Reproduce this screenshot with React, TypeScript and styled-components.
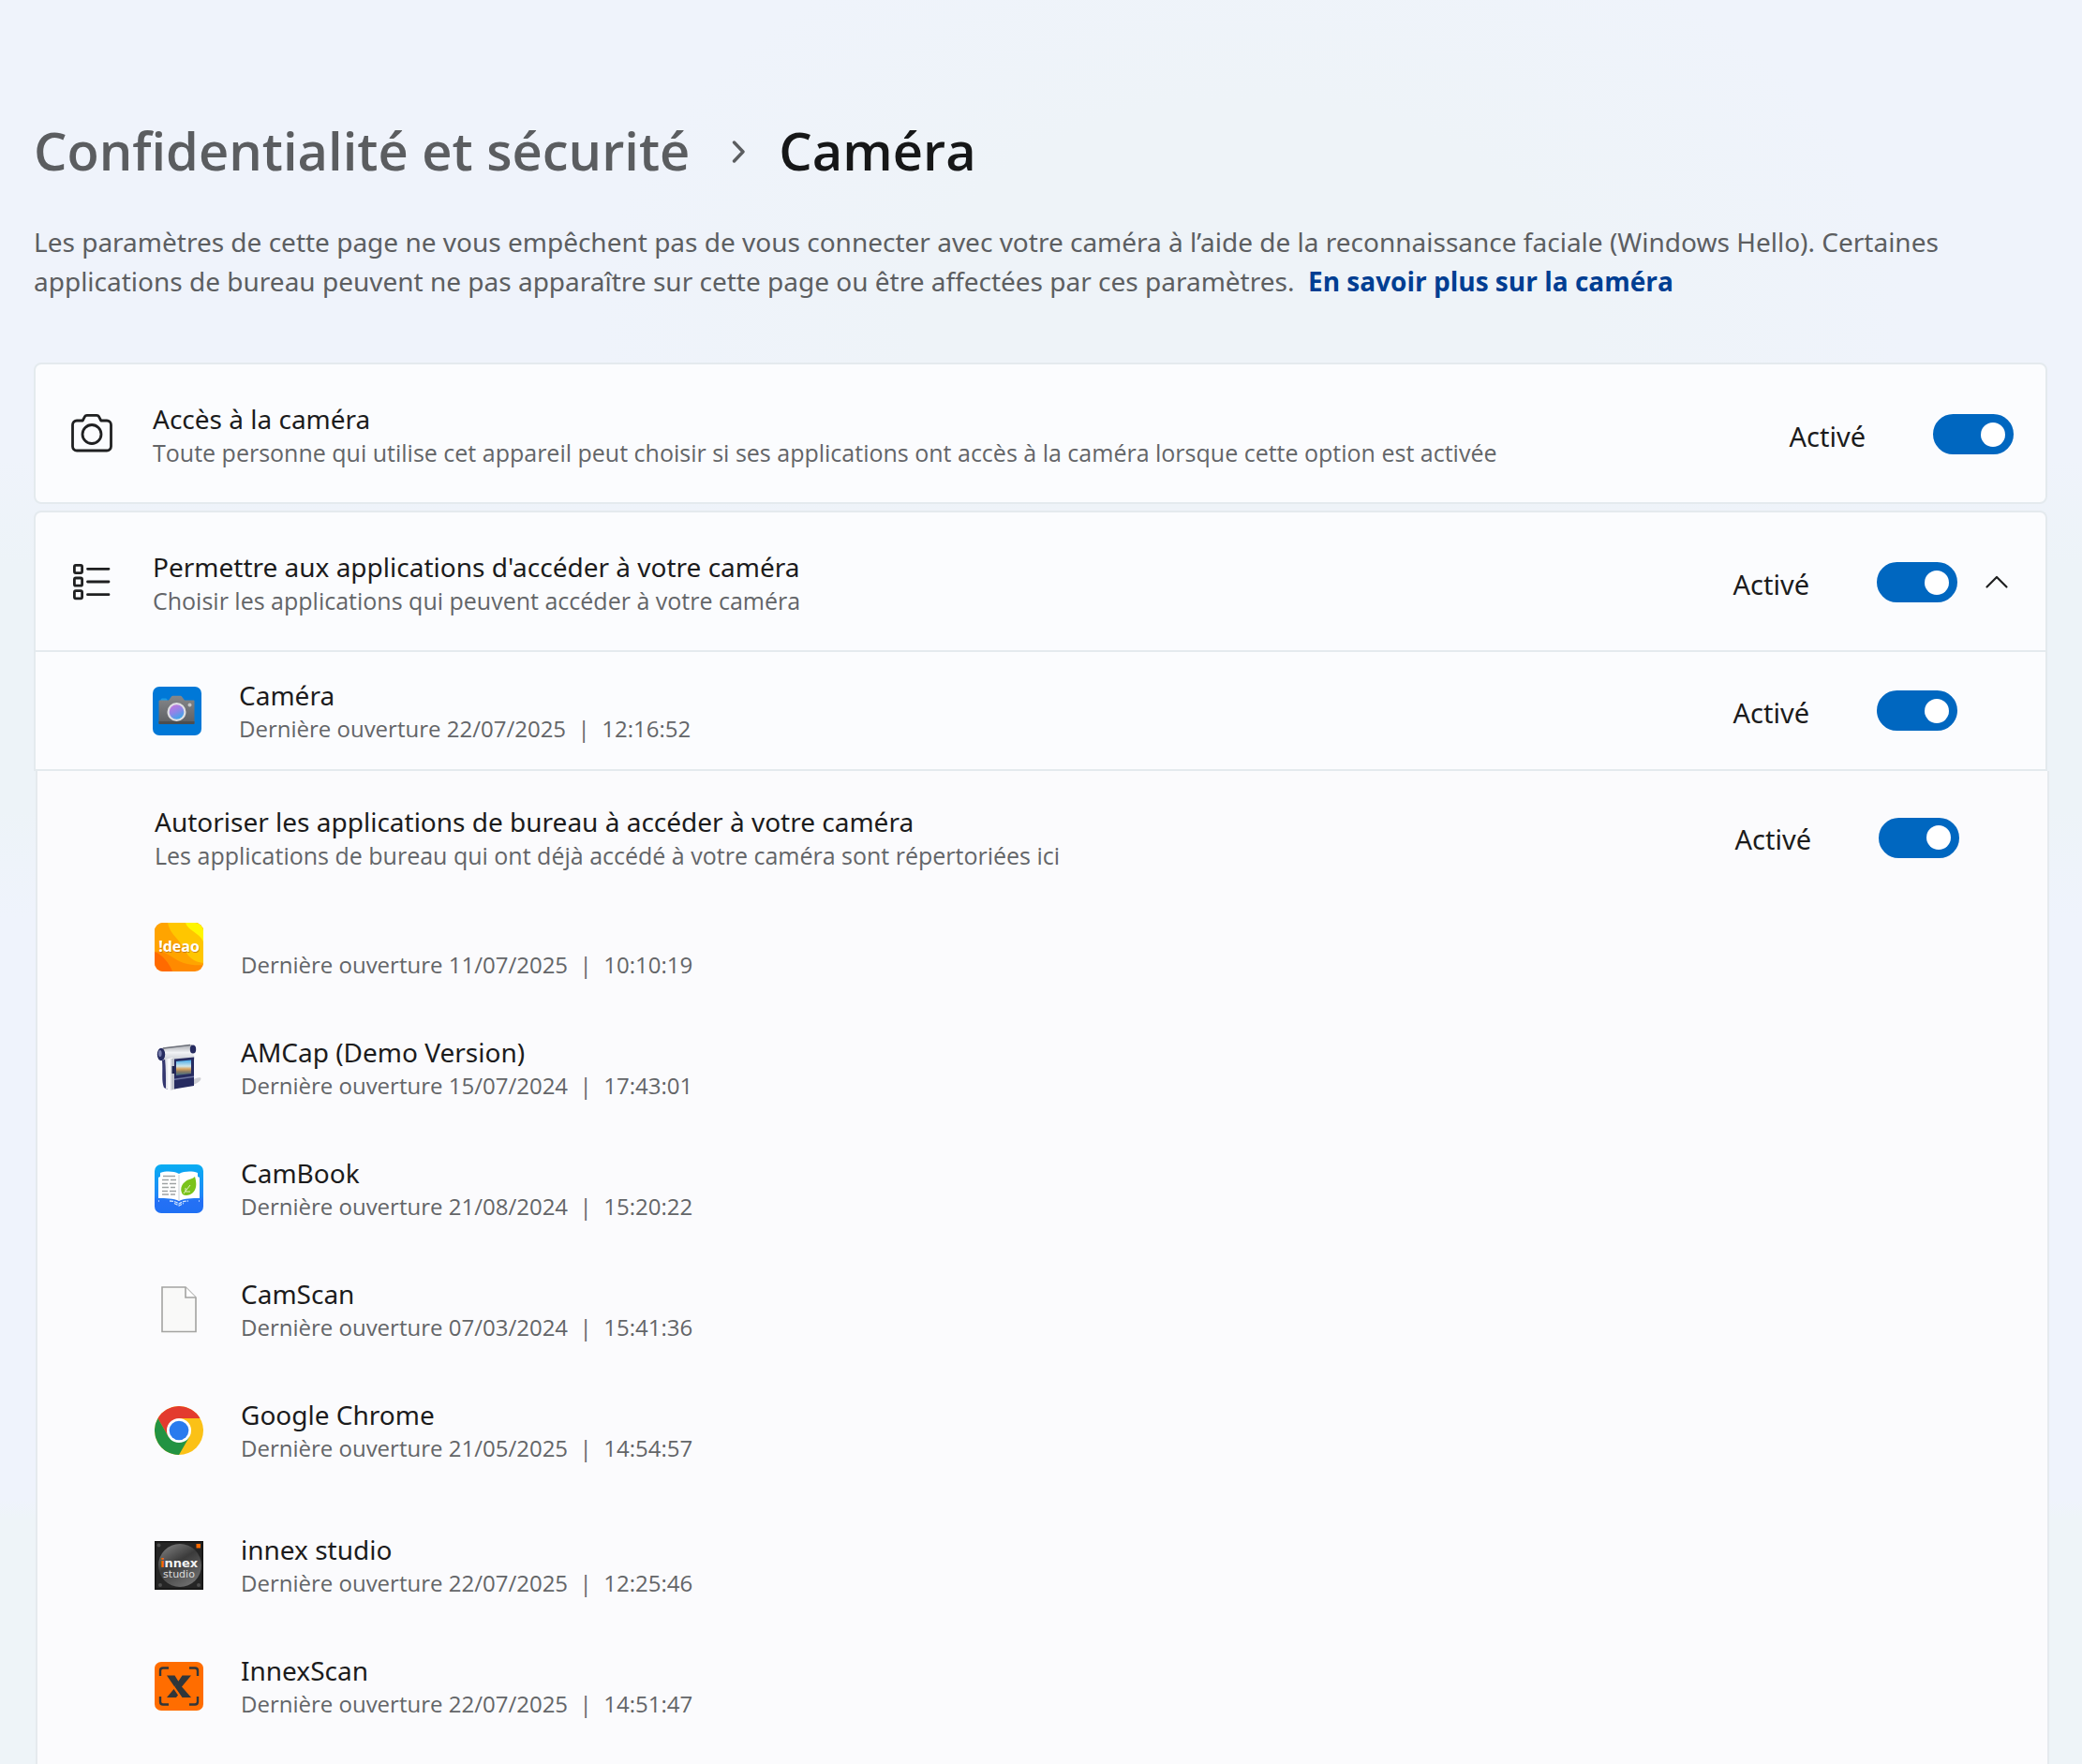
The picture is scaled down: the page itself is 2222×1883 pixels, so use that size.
import React, { useId, useState } from "react";
import styled, { createGlobalStyle } from "styled-components";

const GlobalStyle = createGlobalStyle`
  * { box-sizing: border-box; }
  body {
    margin: 0;
    font-family: "Open Sans", "Noto Sans", sans-serif;
    color: #1b1b1c;
    background: #eff3fb;
  }
`;

const Page = styled.main`
  display: flex;
  flex-direction: column;
  min-height: 100vh;
  padding: 120px 37px 0 36px;
  background:
    radial-gradient(ellipse 700px 460px at 60% 18%, #eef3f8 0%, #eef3f8 50%, #eef3f800 100%),
    linear-gradient(180deg, #eff3fb 0%, #eff3fb 26%, #edf3f8 32%, #edf3f8 46%, #eff3fc 52%, #eff3fc 85%, #eef4f8 86%, #eef4f8 100%);
`;

const Breadcrumb = styled.nav`
  display: flex;
  align-items: center;
  font-size: 56px;
  line-height: 80px;
  font-weight: 600;
`;

const ParentLink = styled.a`
  color: #5b5d60;
  text-decoration: none;
`;

const Separator = styled.svg`
  flex: none;
  width: 17px;
  height: 24px;
  margin: 4px 34px 0 44px;
`;

const PageTitle = styled.h1`
  margin: 0;
  font: inherit;
  color: #161718;
`;

const Intro = styled.p`
  margin: 37px 0 66px;
  font-family: "Noto Sans", "Open Sans", sans-serif;
  font-size: 28px;
  line-height: 42px;
  color: #5c5e61;
  white-space: pre-wrap;
`;

const LearnMore = styled.a`
  font-family: "Open Sans", "Noto Sans", sans-serif;
  font-weight: 700;
  color: #003e92;
  text-decoration: none;
`;

const Card = styled.section`
  border: 2px solid #e4eaee;
  border-radius: 8px;
  background: #fbfcfe;
`;

const Expander = styled(Card)`
  margin-top: 7px;
  border-bottom: 0;
  border-radius: 8px 8px 0 0;
`;

const DesktopPanel = styled.section`
  flex: 1;
  margin: 0 -2px 0 2px;
  border: 2px solid #e5eaee;
  border-top: 0;
  border-bottom: 0;
  background: #fbfbfd;
`;

const SettingRow = styled.div`
  display: flex;
  align-items: center;
  min-height: 147px;
  padding: 2px 34px 0 36px;
`;

const AppRow = styled.div`
  display: flex;
  align-items: center;
  min-height: 129px;
  padding: 0 94px 0 125px;
  border-top: 2px solid #e4eaee;
  border-bottom: 2px solid #e4eaee;
`;

const DesktopHeader = styled.div`
  display: flex;
  align-items: center;
  padding: 35px 94px 16px 125px;
`;

const AppList = styled.ul`
  list-style: none;
  margin: 0;
  padding: 0;
  & + & { margin-top: 15px; }
`;

const DesktopApp = styled.li`
  display: flex;
  align-items: center;
  min-height: 129px;
  padding-left: 125px;
`;

const GlyphSlot = styled.span`
  flex: none;
  display: flex;
  justify-content: center;
  width: 48px;
  margin-right: 41px;
`;

const AppIcon = styled.svg`
  flex: none;
  display: block;
  width: 52px;
  height: 52px;
  margin-right: 40px;
`;

const Texts = styled.div`
  flex: 1;
  min-width: 0;
`;

const Title = styled.div`
  min-height: 38px;
  font-family: "Noto Sans", "Open Sans", sans-serif;
  font-size: 28px;
  line-height: 38px;
`;

const Caption = styled.div`
  font-size: 25px;
  line-height: 34px;
  color: #636568;
`;

const Timestamp = styled(Caption)`
  font-size: 24px;
  white-space: pre-wrap;
`;

const SwitchField = styled.div`
  flex: none;
  display: flex;
  align-items: center;
  gap: 72px;
`;

const SwitchLabel = styled.label`
  padding-top: 4px;
  font-family: "Noto Sans", "Open Sans", sans-serif;
  font-size: 29px;
  line-height: 38px;
`;

const SwitchInput = styled.input`
  appearance: none;
  display: flex;
  align-items: center;
  width: 86px;
  height: 43px;
  margin: 0;
  padding: 0 8px;
  border: 2px solid #0067c0;
  border-radius: 22px;
  background: #ffffff;
  cursor: pointer;
  &::before {
    content: "";
    width: 26px;
    height: 26px;
    border-radius: 50%;
    background: #5c5e61;
  }
  &:checked {
    justify-content: flex-end;
    padding-right: 7px;
    background: #0067c0;
  }
  &:checked::before { background: #ffffff; }
`;

const CollapseButton = styled.button`
  flex: none;
  display: flex;
  justify-content: center;
  align-items: center;
  width: 40px;
  height: 43px;
  margin: 0 -2px 0 22px;
  padding: 0;
  border: 0;
  background: none;
  color: inherit;
  cursor: pointer;
`;

function Switch({ name }: { name: string }) {
  const id = useId();
  const [on, setOn] = useState(true);
  return (
    <SwitchField>
      <SwitchLabel htmlFor={id}>{on ? "Activé" : "Désactivé"}</SwitchLabel>
      <SwitchInput id={id} type="checkbox" role="switch" title={name} checked={on} onChange={(e) => setOn(e.target.checked)} />
    </SwitchField>
  );
}

const CameraGlyph = () => (
  <svg width="48" height="48" viewBox="0 0 48 48" fill="none" stroke="#1f2021" strokeWidth="2.8" strokeLinejoin="round" aria-hidden="true">
    <path d="M8 9h6.200l2.200-4.200c.5-.9 1.300-1.400 2.300-1.400h10.600c1 0 1.800.5 2.300 1.400L33.800 9H40a4.500 4.500 0 0 1 4.500 4.500v23a4.500 4.500 0 0 1-4.500 4.500H8a4.500 4.500 0 0 1-4.500-4.500v-23A4.500 4.500 0 0 1 8 9z" />
    <circle cx="24" cy="23.500" r="10" />
  </svg>
);

const ListGlyph = () => (
  <svg width="48" height="48" viewBox="0 0 48 48" fill="none" stroke="#1f2021" strokeWidth="2.8" strokeLinecap="round" aria-hidden="true">
    <rect x="5.400" y="5.400" width="8.200" height="8.200" rx="1.500" />
    <rect x="5.400" y="19" width="8.200" height="8.200" rx="1.500" />
    <rect x="5.400" y="32.600" width="8.200" height="8.200" rx="1.500" />
    <path d="M19.500 9.300H42M19.500 23H42M19.500 36.700H42" />
  </svg>
);

const CameraApp = () => (
  <AppIcon viewBox="0 0 52 52" aria-hidden="true">
    <defs>
      <linearGradient id="body" x1="0" y1="0" x2="0" y2="1">
        <stop offset="0" stopColor="#85878a" />
        <stop offset="1" stopColor="#5d5f62" />
      </linearGradient>
      <linearGradient id="lens" x1="0.2" y1="0" x2="0.7" y2="1">
        <stop offset="0" stopColor="#c477dd" />
        <stop offset="0.5" stopColor="#8b86e8" />
        <stop offset="1" stopColor="#35a9ea" />
      </linearGradient>
    </defs>
    <rect width="52" height="52" rx="7" fill="#0078d7" />
    <rect x="8.500" y="12.500" width="7" height="5" rx="1.500" fill="#199be8" />
    <path d="M7.500 14.500H17l3-4c.4-.5.8-.7 1.400-.7h8.200c.6 0 1 .2 1.400.7l3 4h9.500c.6 0 1 .4 1 1V39c0 .6-.4 1-1 1h-36c-.6 0-1-.4-1-1V15.500c0-.6.4-1 1-1z" fill="url(#body)" />
    <path d="M6.500 37h38v2c0 .6-.4 1-1 1h-36c-.6 0-1-.4-1-1z" fill="#4c4e50" />
    <circle cx="39.500" cy="19.500" r="2" fill="#c2c4c6" />
    <circle cx="25.500" cy="27" r="10" fill="#dfe0e4" />
    <circle cx="25.500" cy="27" r="7.800" fill="url(#lens)" />
  </AppIcon>
);

const IdeaoApp = () => (
  <AppIcon viewBox="0 0 52 52" aria-hidden="true">
    <clipPath id="tile"><rect width="52" height="52" rx="9" /></clipPath>
    <g clipPath="url(#tile)">
      <rect width="52" height="52" fill="#ff8a00" />
      <path d="M0 31C8 34 15 42 19 52H0z" fill="#ff6a00" />
      <path d="M0 0h52v45C40 46 30 44 21 38 12 32 8 30 0 31z" fill="#ffa400" />
      <path d="M14 0c2 10 8 14 13 21 6 9 9 20 25 22V0z" fill="#ffc600" />
      <path d="M33 0c2 8 14 10 19 20V0z" fill="#fff600" />
      <text x="26.500" y="32" textAnchor="middle" fontFamily="Open Sans, sans-serif" fontWeight="700" fontSize="16" fill="#b86a10" opacity="0.7" aria-hidden="true">!deao</text>
      <text x="26" y="31" textAnchor="middle" fontFamily="Open Sans, sans-serif" fontWeight="700" fontSize="16" fill="#ffffff">!deao</text>
    </g>
  </AppIcon>
);

const AmcapApp = () => (
  <AppIcon viewBox="0 0 52 52" aria-hidden="true">
    <defs>
      <linearGradient id="metal" x1="0" y1="0" x2="0" y2="1">
        <stop offset="0" stopColor="#a4a7ae" />
        <stop offset="0.5" stopColor="#f1f2f5" />
        <stop offset="1" stopColor="#c9ccd3" />
      </linearGradient>
      <linearGradient id="side" x1="0" y1="0" x2="1" y2="0">
        <stop offset="0" stopColor="#d5d7df" />
        <stop offset="0.4" stopColor="#ffffff" />
        <stop offset="0.7" stopColor="#b9bcc6" />
        <stop offset="1" stopColor="#e6e7ec" />
      </linearGradient>
      <linearGradient id="screen" x1="0" y1="0" x2="0" y2="1">
        <stop offset="0" stopColor="#45a9e8" />
        <stop offset="0.4" stopColor="#cfe6ea" />
        <stop offset="0.58" stopColor="#dba560" />
        <stop offset="0.75" stopColor="#8a7a62" />
        <stop offset="1" stopColor="#3f6c86" />
      </linearGradient>
    </defs>
    <path d="M38 40c5-3 11-5 11.500-3 0 4-7 7-15 9z" fill="#8f9199" opacity="0.4" />
    <path d="M8 18l5-2 1 33-4-2C7 40 9 30 8 18z" fill="#34376f" />
    <path d="M11 16h12v32l-6 2-5-2c0-12 0-22-1-32z" fill="url(#side)" />
    <path d="M8 4.500L40 1v8l3 6-1 3H21l-2-3-9 2z" fill="url(#metal)" />
    <path d="M9 5L38 1.500" stroke="#6d7079" strokeWidth="1.600" />
    <ellipse cx="7" cy="11.500" rx="4.200" ry="6.800" fill="#262b60" />
    <ellipse cx="5.800" cy="10.500" rx="1.800" ry="3.500" fill="#777dab" />
    <ellipse cx="41" cy="6" rx="3.200" ry="4.600" fill="#262b60" />
    <path d="M21 16.500l21-2V45l-21 3.500z" fill="#262b60" />
    <path d="M18.500 24h3v8h-3z" fill="#20254f" />
    <path d="M23 19l16-1.500V32l-16 2z" fill="url(#screen)" />
    <path d="M21 37.500l21-3v1.600l-21 3z" fill="#6f76a3" />
  </AppIcon>
);

const CamBookApp = () => (
  <AppIcon viewBox="0 0 52 52" aria-hidden="true">
    <defs>
      <linearGradient id="sky" x1="0" y1="0" x2="0" y2="1">
        <stop offset="0" stopColor="#08adf2" />
        <stop offset="0.65" stopColor="#1f86f8" />
        <stop offset="0.75" stopColor="#2470f5" />
        <stop offset="1" stopColor="#1f70f4" />
      </linearGradient>
    </defs>
    <rect width="52" height="52" rx="7" fill="url(#sky)" />
    <path d="M4 36V14l2-1V9c6-2 14-2 20 1 6-3 14-3 20-1v4l2 1v22c-8 0-16 0-22 3-6-3-14-3-22-3z" fill="#ffffff" />
    <path d="M26 11v27" stroke="#dde2e4" strokeWidth="1.500" />
    <path d="M9 12.500h13M8 16.500h7m2 0h6M8 20.500h6m2 0h7M8 24.500h7m2 0h5M8 28.500h6m2 0h7M8 32h7m2 0h5" stroke="#9ea3a4" strokeWidth="1.400" />
    <path d="M43 13c2 7 2 13-2 17-3 3-8 4-11 2-3-4-2-10 2-13 4-4 8-3 11-6z" fill="#7ac31c" />
    <path d="M31 31l7-9M33 29v-4m0 4h5" stroke="#dff0c2" strokeWidth="1" fill="none" />
    <path d="M16 39c4 0 7 1 10 3 3-2 6-3 10-3M4 39h1m42 0h1M21 41.500l5 2.500 5-2.500" stroke="#cfe4ff" strokeWidth="1.300" strokeDasharray="4 1" fill="none" />
  </AppIcon>
);

const CamScanApp = () => (
  <AppIcon viewBox="0 0 52 52" aria-hidden="true">
    <path d="M8 2h25l11 11v36.500H8z" fill="#f9f9f8" stroke="#a3a3a1" strokeWidth="1.600" />
    <path d="M33 2v11h11" fill="#ffffff" stroke="#a3a3a1" strokeWidth="1.600" />
  </AppIcon>
);

const ChromeApp = () => (
  <AppIcon viewBox="0 0 52 52" aria-hidden="true">
    <circle cx="26" cy="26" r="26" fill="#fbc116" />
    <path d="M3.480 13A26 26 0 0 1 48.520 13H26L14.740 32.500z" fill="#e33b2e" />
    <path d="M3.480 13A26 26 0 0 0 26 52L37.260 32.500 26 26 14.740 32.500z" fill="#229342" />
    <circle cx="26" cy="26" r="13" fill="#ffffff" />
    <circle cx="26" cy="26" r="10.300" fill="#2a7bee" />
  </AppIcon>
);

const InnexStudioApp = () => (
  <AppIcon viewBox="0 0 52 52" aria-hidden="true">
    <defs>
      <linearGradient id="disc" x1="0" y1="0" x2="0.6" y2="1">
        <stop offset="0" stopColor="#8a8a8a" />
        <stop offset="0.5" stopColor="#3b3b3b" />
        <stop offset="1" stopColor="#6b6b6b" />
      </linearGradient>
    </defs>
    <rect width="52" height="52" fill="#131313" />
    <rect x="1.500" y="1.500" width="49" height="49" fill="#252525" />
    <circle cx="27" cy="26" r="23" fill="url(#disc)" />
    <circle cx="4.500" cy="4.500" r="2" fill="#4c4c4c" />
    <circle cx="6" cy="47" r="2" fill="#4c4c4c" />
    <circle cx="47" cy="47" r="2" fill="#4c4c4c" />
    <rect x="44.500" y="3" width="4.500" height="4.500" fill="#ff6a00" />
    <text x="26" y="28" textAnchor="middle" fontFamily="DejaVu Sans, sans-serif" fontWeight="700" fontSize="13" fill="#f2f2f2"><tspan fill="#ff6a00">i</tspan>nnex</text>
    <text x="26" y="39" textAnchor="middle" fontFamily="DejaVu Sans, sans-serif" fontSize="11" fill="#dcdcdc">studio</text>
  </AppIcon>
);

const InnexScanApp = () => (
  <AppIcon viewBox="0 0 52 52" aria-hidden="true">
    <rect width="52" height="52" rx="7" fill="#ff6d00" />
    <path d="M6 15V9.500C6 7.500 7 6.500 9 6.500h6M37 6.500h6c2 0 3 1 3 3V15M46 37v5.500c0 2-1 3-3 3h-6M15 45.500H9c-2 0-3-1-3-3V37" fill="none" stroke="#30363a" strokeWidth="2.400" />
    <path d="M13 14.500h8.500l4 6.500-4.300 5.500zM29.500 14.500H39L29 26.500l10 11.500h-9.500L21.500 26.500zM20.500 29l4.500 6.500-2 2.500H13z" fill="#30363a" />
  </AppIcon>
);

type AppEntry = { name: string; date: string; time: string; Icon: React.FC };

const recentApps: AppEntry[] = [
  { name: "", date: "11/07/2025", time: "10:10:19", Icon: IdeaoApp },
  { name: "AMCap (Demo Version)", date: "15/07/2024", time: "17:43:01", Icon: AmcapApp },
  { name: "CamBook", date: "21/08/2024", time: "15:20:22", Icon: CamBookApp },
  { name: "CamScan", date: "07/03/2024", time: "15:41:36", Icon: CamScanApp },
  { name: "Google Chrome", date: "21/05/2025", time: "14:54:57", Icon: ChromeApp },
];

const innexApps: AppEntry[] = [
  { name: "innex studio", date: "22/07/2025", time: "12:25:46", Icon: InnexStudioApp },
  { name: "InnexScan", date: "22/07/2025", time: "14:51:47", Icon: InnexScanApp },
];

const lastOpened = (date: string, time: string) => `Dernière ouverture ${date}  |  ${time}`;

function Apps({ items }: { items: AppEntry[] }) {
  return (
    <AppList>
      {items.map(({ name, date, time, Icon }) => (
        <DesktopApp key={date + time}>
          <Icon />
          <Texts>
            <Title>{name}</Title>
            <Timestamp>{lastOpened(date, time)}</Timestamp>
          </Texts>
        </DesktopApp>
      ))}
    </AppList>
  );
}

export default function App() {
  return (
    <>
      <GlobalStyle />
      <Page>
        <Breadcrumb>
          <ParentLink href="#privacy">Confidentialité et sécurité</ParentLink>
          <Separator viewBox="0 0 17 24" fill="none" stroke="#5b5d60" strokeWidth="3.400" strokeLinecap="round" strokeLinejoin="round" aria-hidden="true">
            <path d="M3.500 2l9.500 10-9.500 10" />
          </Separator>
          <PageTitle>Caméra</PageTitle>
        </Breadcrumb>
        <Intro>
          Les paramètres de cette page ne vous empêchent pas de vous connecter avec votre caméra à l’aide de la reconnaissance faciale (Windows Hello). Certaines applications de bureau peuvent ne pas apparaître sur cette page ou être affectées par ces paramètres.{"  "}
          <LearnMore href="#camera">En savoir plus sur la caméra</LearnMore>
        </Intro>

        <Card>
          <SettingRow>
            <GlyphSlot><CameraGlyph /></GlyphSlot>
            <Texts>
              <Title>Accès à la caméra</Title>
              <Caption>Toute personne qui utilise cet appareil peut choisir si ses applications ont accès à la caméra lorsque cette option est activée</Caption>
            </Texts>
            <Switch name="Accès à la caméra" />
          </SettingRow>
        </Card>

        <Expander>
          <SettingRow>
            <GlyphSlot><ListGlyph /></GlyphSlot>
            <Texts>
              <Title>Permettre aux applications d'accéder à votre caméra</Title>
              <Caption>Choisir les applications qui peuvent accéder à votre caméra</Caption>
            </Texts>
            <Switch name="Permettre aux applications d'accéder à votre caméra" />
            <CollapseButton aria-label="Réduire" aria-expanded="true">
              <svg width="26" height="16" viewBox="0 0 26 16" fill="none" stroke="#1f2021" strokeWidth="2.200" strokeLinecap="round" strokeLinejoin="round" aria-hidden="true">
                <path d="M2.500 12.500L13 2l10.500 10.500" />
              </svg>
            </CollapseButton>
          </SettingRow>
          <AppRow>
            <CameraApp />
            <Texts>
              <Title>Caméra</Title>
              <Timestamp>{lastOpened("22/07/2025", "12:16:52")}</Timestamp>
            </Texts>
            <Switch name="Caméra" />
          </AppRow>
        </Expander>

        <DesktopPanel>
          <DesktopHeader>
            <Texts>
              <Title>Autoriser les applications de bureau à accéder à votre caméra</Title>
              <Caption>Les applications de bureau qui ont déjà accédé à votre caméra sont répertoriées ici</Caption>
            </Texts>
            <Switch name="Applications de bureau" />
          </DesktopHeader>
          <Apps items={recentApps} />
          <Apps items={innexApps} />
        </DesktopPanel>
      </Page>
    </>
  );
}
